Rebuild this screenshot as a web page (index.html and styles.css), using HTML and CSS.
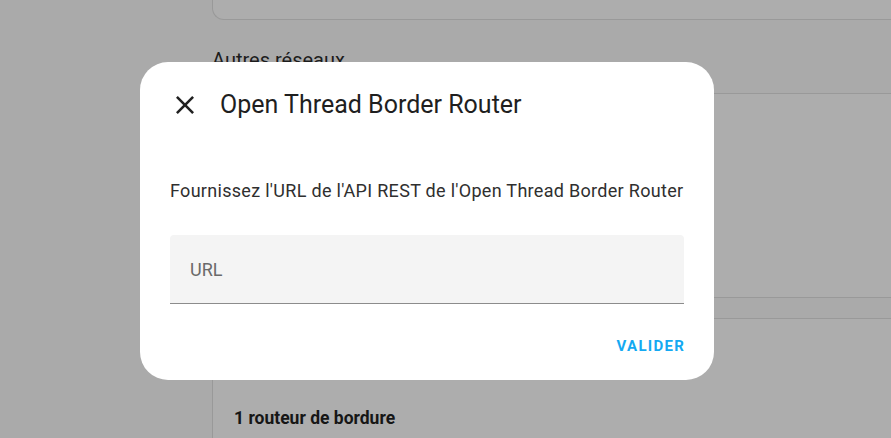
FILE: index.html
```html
<!DOCTYPE html>
<html lang="fr">
<head>
  <meta charset="UTF-8">
  <meta name="viewport" content="width=device-width, initial-scale=1">
  <title>Thread</title>
  <link rel="stylesheet" href="styles.css">
</head>
<body>

  <div class="page">
    <div class="card card-top"></div>
    <h2 class="section-title">Autres réseaux</h2>
    <div class="card card-network"></div>
    <div class="card card-routers">
      <div class="routers-count">1 routeur de bordure</div>
    </div>
  </div>

  <div class="dialog">
    <div class="dialog-header">
      <button class="close-btn" aria-label="Fermer">
        <svg viewBox="5 5 14 14" width="18" height="18">
          <path d="M19,6.41L17.59,5L12,10.59L6.41,5L5,6.41L10.59,12L5,17.59L6.41,19L12,13.41L17.59,19L19,17.59L13.41,12L19,6.41Z" fill="#212121"/>
        </svg>
      </button>
      <span class="dialog-title">Open Thread Border Router</span>
    </div>

    <p class="dialog-text">Fournissez l'URL de l'API REST de l'Open Thread Border Router</p>

    <label class="text-field">
      <span class="field-label">URL</span>
    </label>

    <div class="dialog-actions">
      <button class="action-btn">Valider</button>
    </div>
  </div>

</body>
</html>
```

FILE: styles.css
```css
body {
  margin: 0;
  padding: 0;
  font-family: Roboto, "Noto Sans", sans-serif;
  background: #aaaaaa;
  color: #212121;
  height: 438px;
  overflow: hidden;
}

.page {
  padding-left: 212px;
}

.card {
  background: #adadad;
  border: 1px solid #999999;
  border-right: none;
}

.card-top {
  height: 19px;
  border-top: none;
  border-bottom-left-radius: 12px;
}

.section-title {
  margin: 0;
  padding-top: 24px;
  height: 49px;
  font-size: 20px;
  font-weight: 400;
  line-height: 32px;
  color: #1c1c1c;
}

.card-network {
  height: 203px;
  border-radius: 12px 0 0 12px;
}

.card-routers {
  margin-top: 20px;
  height: 32px;
  border-bottom: none;
  border-radius: 12px 0 0 0;
  padding: 87px 0 0 21px;
}

.routers-count {
  font-size: 17.5px;
  font-weight: 700;
  line-height: 24px;
  color: #161616;
}

/* dialog over the overlay */
.dialog {
  position: absolute;
  left: 140px;
  top: 62px;
  width: 574px;
  height: 318px;
  box-sizing: border-box;
  background: white;
  border-radius: 28px;
  padding: 27px 30px 0 30px;
}

.dialog-header {
  display: flex;
  align-items: center;
  height: 32px;
}

.close-btn {
  width: 30px;
  height: 32px;
  padding: 0;
  margin: 0 20px 0 0;
  border: none;
  background: none;
  display: flex;
  align-items: center;
  justify-content: center;
}

.close-btn svg {
  display: block;
}

.dialog-title {
  font-size: 25px;
  line-height: 32px;
  color: #1f1f1f;
}

.dialog-text {
  margin: 58px 0 0 0;
  font-size: 18px;
  letter-spacing: 0.3px;
  line-height: 24px;
  color: #2f2f2f;
}

.text-field {
  display: flex;
  align-items: center;
  margin-top: 32px;
  height: 68px;
  background: #f4f4f4;
  border-radius: 4px 4px 0 0;
  border-bottom: 1px solid #8c8c8c;
  padding-left: 20px;
}

.field-label {
  font-size: 18px;
  color: #6a6a6a;
}

.dialog-actions {
  display: flex;
  justify-content: flex-end;
  margin-top: 30px;
}

.action-btn {
  border: none;
  background: none;
  padding: 0;
  font-family: inherit;
  font-size: 15px;
  font-weight: 700;
  letter-spacing: 1.25px;
  text-transform: uppercase;
  color: #14a9f2;
  line-height: 24px;
  margin-right: -1px;
}
```
